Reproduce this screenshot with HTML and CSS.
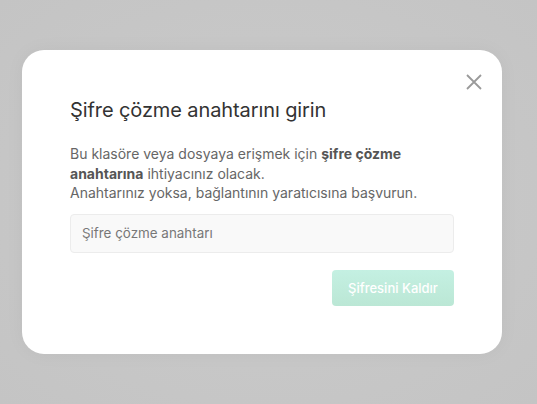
FILE: index.html
```html
<html>
<head>
    <title>Şifre çözme</title>
    <link rel="stylesheet" href="styles.css">
</head>
<body>
    <div class="overlay">
        <div class="modal">
            <button class="close" aria-label="Kapat">
                <svg width="16" height="16" viewBox="0 0 16 16"><path d="M1 1 L15 15 M15 1 L1 15" stroke="#9a9a9a" stroke-width="1.8" fill="none"/></svg>
            </button>
            <h2 class="title">Şifre çözme anahtarını girin</h2>
            <p class="desc">
                Bu klasöre veya dosyaya erişmek için <b>şifre çözme anahtarına</b> ihtiyacınız olacak.<br>
                Anahtarınız yoksa, bağlantının yaratıcısına başvurun.
            </p>
            <input class="key" type="text" placeholder="Şifre çözme anahtarı">
            <div class="actions">
                <button class="submit" disabled>Şifresini Kaldır</button>
            </div>
        </div>
    </div>
</body>
</html>
```

FILE: styles.css
```css
html, body { margin: 0; height: 100%; }
body { font-family: Inter, "Noto Sans", sans-serif; background: #c6c6c6; }
.overlay { height: 100%; padding: 50px 0 0 22px; box-sizing: border-box; background: radial-gradient(ellipse at center, #cbcbcb 0%, #c4c4c4 100%); }
.modal { position: relative; width: 480px; height: 304px; box-sizing: border-box; background: #fff; border-radius: 22px; padding: 48px 48px 0 48px; box-shadow: 0 0 20px rgba(0,0,0,0.04); }
.close { position: absolute; top: 24px; right: 20px; border: 0; background: none; padding: 0; width: 16px; height: 16px; cursor: pointer; }
.close svg { display: block; }
.title { margin: 0; font-size: 20px; font-weight: 400; color: #333; line-height: 24px; letter-spacing: -0.1px; }
.desc { margin: 22px 0 0 0; font-size: 14px; line-height: 19.5px; color: #666; width: 360px; }
.desc b { color: #555; font-weight: 700; }
.key { display: block; margin-top: 11px; width: 384px; height: 39px; box-sizing: border-box; border: 1px solid #ececec; border-radius: 4px; background: #f9f9f9; padding: 0 11px; font-family: inherit; font-size: 13.4px; color: #333; outline: none; }
.key::placeholder { color: #777; }
.actions { display: flex; justify-content: flex-end; margin-top: 17px; }
.submit { width: 122px; height: 36px; border: 0; border-radius: 4px; background: linear-gradient(#c4f0e2, #bbe7d5); color: #fff; font-family: inherit; font-size: 13px; font-weight: 500; }
```
